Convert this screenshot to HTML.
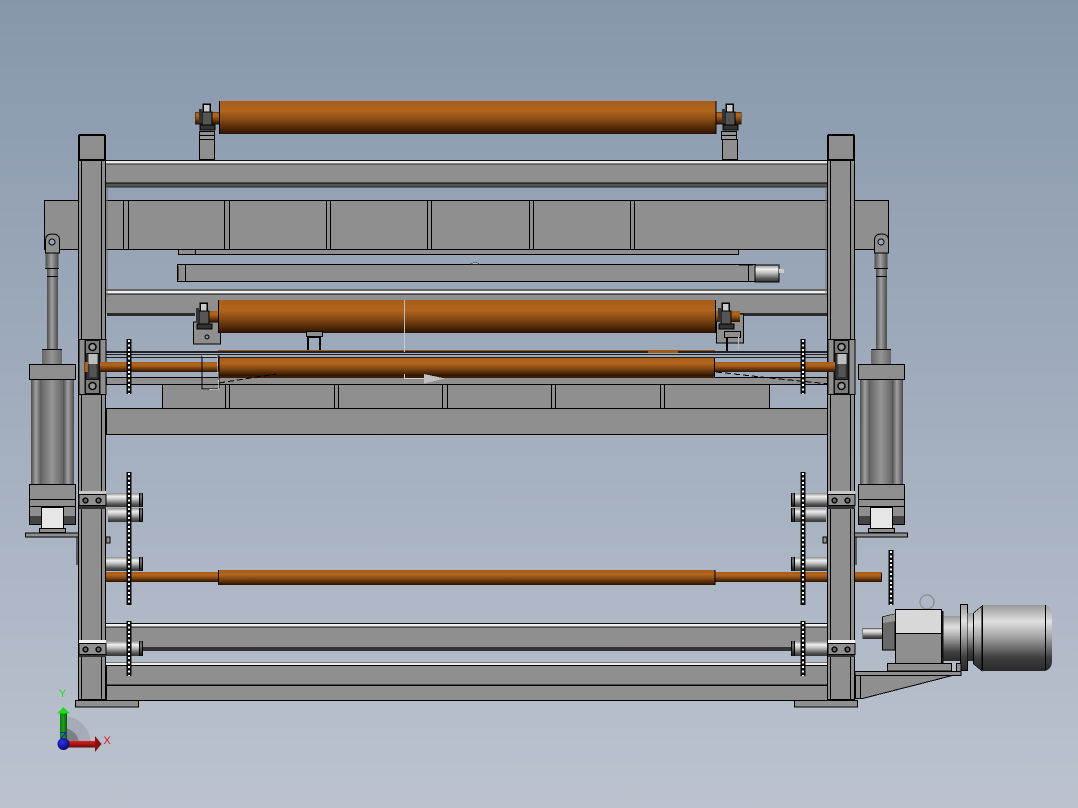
<!DOCTYPE html>
<html><head><meta charset="utf-8"><title>CAD</title>
<style>
html,body{margin:0;padding:0;width:1078px;height:808px;overflow:hidden;background:#a0abbb}
svg{display:block}
.g{fill:#8f8f8f;stroke:#000;stroke-width:1}
.n{fill:none;stroke:#000;stroke-width:1}
.b2{fill:none;stroke:#000;stroke-width:2}
.w{fill:#e8e8e8;stroke:#000;stroke-width:1}
.d{fill:#1a1a1a}
text{font-family:"Liberation Sans",sans-serif}
</style></head><body>
<svg width="1078" height="808" viewBox="0 0 1078 808" xmlns="http://www.w3.org/2000/svg" shape-rendering="crispEdges">
<defs>
<linearGradient id="bg" x1="0" y1="0" x2="0" y2="1"><stop offset="0" stop-color="#8797ab"/><stop offset=".5" stop-color="#a1adbd"/><stop offset="1" stop-color="#bcc3cf"/></linearGradient>
<linearGradient id="or" x1="0" y1="0" x2="0" y2="1"><stop offset="0" stop-color="#a55d1a"/><stop offset=".3" stop-color="#b3651c"/><stop offset=".55" stop-color="#8a4c14"/><stop offset=".8" stop-color="#552c0a"/><stop offset="1" stop-color="#2b1200"/></linearGradient>
<linearGradient id="si" x1="0" y1="0" x2="0" y2="1"><stop offset="0" stop-color="#8c8c8c"/><stop offset=".25" stop-color="#f0f0f0"/><stop offset=".5" stop-color="#b5b5b5"/><stop offset=".8" stop-color="#555"/><stop offset="1" stop-color="#333"/></linearGradient>
<linearGradient id="mo" x1="0" y1="0" x2="0" y2="1"><stop offset="0" stop-color="#9a9a9a"/><stop offset=".25" stop-color="#e0e0e0"/><stop offset=".5" stop-color="#9f9f9f"/><stop offset=".8" stop-color="#3f3f3f"/><stop offset="1" stop-color="#2a2a2a"/></linearGradient>
<linearGradient id="cy" x1="0" y1="0" x2="1" y2="0"><stop offset="0" stop-color="#4c4c4c"/><stop offset=".45" stop-color="#a0a0a0"/><stop offset="1" stop-color="#4a4a4a"/></linearGradient>
<linearGradient id="cy2" x1="0" y1="0" x2="1" y2="0"><stop offset="0" stop-color="#666"/><stop offset=".5" stop-color="#959595"/><stop offset="1" stop-color="#666"/></linearGradient>
<linearGradient id="gr" x1="0" y1="0" x2="1" y2="0"><stop offset="0" stop-color="#0b7a0b"/><stop offset=".5" stop-color="#1fa01f"/><stop offset="1" stop-color="#075507"/></linearGradient>
<linearGradient id="rd" x1="0" y1="0" x2="0" y2="1"><stop offset="0" stop-color="#e02020"/><stop offset="1" stop-color="#6a0a0a"/></linearGradient>
<radialGradient id="bl" cx=".4" cy=".35" r=".7"><stop offset="0" stop-color="#3030e8"/><stop offset="1" stop-color="#08086a"/></radialGradient>

<g id="spr"><rect x="-2.500" y="0" width="5" height="55" fill="#0a0a0a"/><line x1="0" y1="1" x2="0" y2="55" stroke="#fff" stroke-width="2" stroke-dasharray="2 2.400"/></g>
<g id="sprL"><rect x="-2.500" y="0" width="5" height="133" fill="#0a0a0a"/><line x1="0" y1="1" x2="0" y2="133" stroke="#fff" stroke-width="2" stroke-dasharray="2 2.400"/></g>

<g id="bearing">
<rect x="0.500" y="0.500" width="27" height="55" class="g"/>
<rect x="6" y="0.500" width="16" height="55" fill="#0e0e0e"/>
<rect x="7.500" y="2" width="13" height="12" fill="#7c7c7c"/>
<rect x="7.500" y="41" width="13" height="13" fill="#7c7c7c"/>
<circle cx="14" cy="8" r="3.500" fill="#999" stroke="#000" stroke-width="1.500" shape-rendering="auto"/>
<circle cx="14" cy="47" r="3.500" fill="#999" stroke="#000" stroke-width="1.500" shape-rendering="auto"/>
<rect x="8" y="15" width="12" height="25" fill="#333"/>
<rect x="10" y="15" width="9" height="10" fill="#bdbdbd"/>
<rect x="11" y="25" width="7" height="13" fill="#555"/>
</g>

<g id="clamp">
<rect x="0.500" y="0.500" width="27" height="11" class="g"/>
<circle cx="7" cy="6.500" r="2.400" fill="#666" stroke="#000" stroke-width="1.400" shape-rendering="auto"/>
<circle cx="20" cy="6.500" r="2.400" fill="#666" stroke="#000" stroke-width="1.400" shape-rendering="auto"/>
</g>

<g id="pivot">
<rect x="3" y="0" width="7" height="10" fill="#c9c9c9" stroke="#000" stroke-width="1.500"/>
<rect x="2" y="8" width="10" height="14" fill="#555" stroke="#000"/>
<rect x="-1" y="5" width="3" height="14" fill="#333"/>
<rect x="0" y="21" width="15" height="5" fill="#333" stroke="#000"/>
</g>
</defs>

<rect width="1078" height="808" fill="url(#bg)"/>

<!-- top roller -->
<rect x="195" y="112" width="546" height="12" fill="url(#or)" stroke="#222" stroke-width=".5"/>
<rect x="219" y="101" width="497" height="33" fill="url(#or)"/>
<line x1="219.500" y1="101" x2="219.500" y2="134" stroke="#000"/><line x1="716" y1="101" x2="716" y2="134" stroke="#000"/>
<use href="#pivot" x="200" y="104"/><use href="#pivot" x="723" y="104"/>
<rect x="199.500" y="131.500" width="15" height="4" class="g"/><rect x="199.500" y="135.500" width="15" height="4" fill="#999" stroke="#000"/>
<rect x="721.500" y="131.500" width="15" height="4" class="g"/><rect x="721.500" y="135.500" width="15" height="4" fill="#999" stroke="#000"/>
<rect x="199.500" y="139.500" width="15" height="20" class="g"/><rect x="722.500" y="139.500" width="15" height="20" class="g"/>

<!-- back beam -->
<rect x="44.500" y="200.500" width="844" height="49" class="g"/>
<g class="n"><path d="M123.500 200v50M128.500 200v50M224.500 200v50M229.500 200v50M326.500 200v50M330.500 200v50M427.500 200v50M431.500 200v50M529.500 200v50M533.500 200v50M630.500 200v50M634.500 200v50"/></g>
<rect x="178.500" y="249.500" width="18" height="5" class="g"/><rect x="195.500" y="249.500" width="543" height="5" class="g"/>

<!-- cylinder -->
<rect x="177.500" y="264.500" width="578" height="17" class="g"/>
<path d="M185.500 265v16M178 266v14M739 265h14M748.500 265v16" class="n"/>
<rect x="755" y="265" width="24" height="17" fill="url(#si)" stroke="#000"/>
<rect x="779" y="269" width="5" height="4" fill="#ccc"/>
<path d="M470 264l6-2 3 2z" fill="#bbb" stroke="#333" stroke-width=".5"/>

<!-- upper rail 2 -->
<rect x="106" y="289" width="721" height="2" fill="#666"/>
<rect x="106" y="291" width="721" height="3" fill="#efefef"/>
<rect x="106" y="294" width="721" height="19" fill="#8f8f8f"/>
<line x1="106" y1="294" x2="827" y2="294" stroke="#000"/>
<rect x="107" y="313" width="88" height="3" fill="#2a2a2a"/>
<rect x="735" y="313" width="92" height="3" fill="#2a2a2a"/>

<!-- lower beam + plate -->
<rect x="106.500" y="408.500" width="721" height="26" class="g"/>
<rect x="162.500" y="384.500" width="607" height="24" class="g"/>
<path d="M225.500 384v24M229.500 384v24M334.500 384v24M338.500 384v24M442.500 384v24M447.500 384v24M551.500 384v24M555.500 384v24M660.500 384v24M664.500 384v24" class="n"/>
<rect x="106.500" y="377.500" width="721" height="7" class="g"/>

<!-- middle roller 2 -->
<rect x="193.500" y="322" width="27" height="22" fill="#8f8f8f" stroke="#000"/>
<circle cx="207" cy="337" r="2" fill="none" stroke="#000" shape-rendering="auto"/>
<rect x="716.500" y="314" width="27" height="29" class="g"/>
<rect x="205" y="311" width="535" height="11" fill="url(#or)"/>
<rect x="218" y="300" width="498" height="33" fill="url(#or)"/>
<line x1="218.500" y1="300" x2="218.500" y2="333" stroke="#000"/><line x1="715.500" y1="300" x2="715.500" y2="333" stroke="#000"/>
<use href="#pivot" x="197" y="303"/><use href="#pivot" x="719" y="303"/>
<rect x="306.500" y="331.500" width="16" height="5" class="g"/>
<path d="M308 337v16M320 337v16" class="b2"/><line x1="309" y1="337.500" x2="320" y2="337.500" stroke="#000"/>
<rect x="724.500" y="331.500" width="16" height="6" class="g"/>
<path d="M727 337v16" class="b2"/><line x1="738.500" y1="337" x2="738.500" y2="353" stroke="#bbb"/>

<!-- lines and roller 3 -->
<rect x="218" y="350" width="497" height="2" fill="#9a5818"/>
<rect x="106" y="351" width="721" height="2" fill="#222"/>
<rect x="106" y="354" width="721" height="1" fill="#222"/>
<rect x="106" y="357" width="721" height="1" fill="#222"/>
<rect x="648" y="350" width="30" height="3" fill="#a05a18"/>
<rect x="218" y="376" width="497" height="2" fill="#3a1d04"/>
<rect x="100" y="362" width="735" height="10" fill="url(#or)"/>
<rect x="218" y="358" width="497" height="18" fill="url(#or)"/>
<line x1="218.500" y1="358" x2="218.500" y2="377" stroke="#000"/><line x1="714.500" y1="358" x2="714.500" y2="377" stroke="#000"/>
<path d="M202 356h17v33h-17z" fill="none" stroke="#000" stroke-width="1.200"/>
<path d="M202 356l15 0 2 33-17 1" fill="none" stroke="#ccc" stroke-width=".6"/>
<path d="M219 383l57-9M716 372l54 6 60 6" stroke="#000" stroke-dasharray="6 3" fill="none"/>
<line x1="404.500" y1="300" x2="404.500" y2="333" stroke="#bdbdbd"/><line x1="404.500" y1="333" x2="404.500" y2="352" stroke="#c8c8c8"/>
<path d="M404.500 374v4.500h20" stroke="#ccc" fill="none"/>
<path d="M424 374l21 4.500-21 5z" fill="#c0c0c0"/>

<!-- shafts lower -->
<rect x="106" y="493" width="37" height="14" fill="url(#si)"/>
<rect x="108" y="508" width="35" height="14" fill="url(#si)"/>
<rect x="106" y="557" width="37" height="14" fill="url(#si)"/>
<rect x="791" y="493" width="37" height="14" fill="url(#si)"/>
<rect x="791" y="508" width="35" height="14" fill="url(#si)"/>
<rect x="791" y="557" width="37" height="14" fill="url(#si)"/>
<path d="M139.500 493v14M142 493v14M139.500 508v14M142 508v14M139.500 557v14M142 557v14M794 493v14M791.500 493v14M794 508v14M791.500 508v14M794 557v14M791.500 557v14" stroke="#000" stroke-width="1.500"/>
<!-- orange bottom shaft -->
<rect x="106" y="572" width="776" height="10" fill="url(#or)"/>
<rect x="218" y="570" width="497" height="15" fill="url(#or)"/>
<line x1="218.500" y1="570" x2="218.500" y2="585" stroke="#000"/><line x1="715" y1="570" x2="715" y2="585" stroke="#000"/>
<rect x="881" y="573" width="1" height="8" fill="#111"/>

<!-- lower rails -->
<rect x="106" y="623" width="721" height="1" fill="#111"/><rect x="106" y="624" width="721" height="3" fill="#f0f0f0"/>
<rect x="106" y="627" width="721" height="20" fill="#8f8f8f"/>
<line x1="106" y1="627" x2="827" y2="627" stroke="#111"/>
<rect x="143" y="647" width="648" height="4" fill="#333"/>
<rect x="106" y="662" width="721" height="1" fill="#777"/><rect x="106" y="663" width="721" height="2.500" fill="#eee"/>
<rect x="106.500" y="665.500" width="721" height="19.500" class="g"/>
<rect x="106.500" y="685.500" width="721" height="15" class="g"/>
<rect x="106" y="641" width="37" height="15" fill="url(#si)"/>
<rect x="791" y="641" width="37" height="15" fill="url(#si)"/>
<path d="M139.500 641v15M142 641v15M794 641v15M791.500 641v15" stroke="#000" stroke-width="1.500"/>

<!-- top rail -->
<rect x="106" y="160" width="721" height="1" fill="#111"/><rect x="106" y="161" width="721" height="3" fill="#e8e8e8"/>
<rect x="106" y="164" width="721" height="19" fill="#8f8f8f"/><line x1="106" y1="164" x2="827" y2="164" stroke="#222"/>
<rect x="106" y="183" width="721" height="4" fill="#555"/><line x1="106" y1="183" x2="827" y2="183" stroke="#000"/><line x1="106" y1="187" x2="827" y2="187" stroke="#222"/>

<!-- columns -->
<rect x="106" y="187" width="2" height="110" fill="#6f6f6f" opacity=".5"/>
<rect x="825" y="187" width="2" height="110" fill="#6f6f6f" opacity=".5"/>
<g id="col"><rect x="78.500" y="160.500" width="27" height="539" class="g"/>
<path d="M81.500 160v540M101.500 160v540" class="n"/>
<rect x="79" y="135" width="26" height="25" rx="1" fill="#8f8f8f" stroke="#000" stroke-width="2"/></g>
<use href="#col" x="749"/>

<!-- base plates -->
<rect x="75.500" y="700.500" width="63" height="6.500" class="g"/>
<rect x="794.500" y="700.500" width="63" height="6.500" class="g"/>

<!-- bearings -->
<use href="#bearing" x="78.500" y="339"/><use href="#bearing" x="827.500" y="339"/>
<rect x="85" y="362" width="3" height="10" fill="#a86018"/>
<rect x="100" y="362" width="7" height="10" fill="url(#or)"/>
<rect x="827" y="362" width="8" height="10" fill="url(#or)"/>

<!-- clamps -->
<rect x="79" y="491" width="27" height="3" fill="#c8c8c8"/><rect x="79" y="505" width="27" height="4" fill="#333"/>
<use href="#clamp" x="78.500" y="494"/>
<rect x="828" y="491" width="27" height="3" fill="#c8c8c8"/><rect x="828" y="505" width="27" height="4" fill="#333"/>
<use href="#clamp" x="827.500" y="494"/>
<rect x="79" y="640" width="27" height="3" fill="#f0f0f0"/><rect x="79" y="654" width="27" height="3" fill="#333"/>
<use href="#clamp" x="78.500" y="643"/>
<rect x="828" y="640" width="27" height="3" fill="#f0f0f0"/><rect x="828" y="654" width="27" height="3" fill="#333"/>
<use href="#clamp" x="827.500" y="643"/>

<!-- sprockets -->
<use href="#spr" x="129" y="339"/><use href="#spr" x="803" y="339"/>
<use href="#sprL" x="129" y="472"/><use href="#sprL" x="803" y="472"/>
<use href="#spr" x="129" y="621"/><use href="#spr" x="803" y="621"/>
<use href="#spr" x="891" y="550"/>

<!-- left pneumatic cylinder -->
<g id="pn">
<rect x="47" y="268" width="11" height="83" fill="url(#cy)"/>
<line x1="47" y1="276.500" x2="58" y2="276.500" stroke="#000"/>
<rect x="45.500" y="253" width="13" height="15" fill="url(#cy)"/><line x1="45" y1="268.500" x2="59" y2="268.500" stroke="#000"/>
<path d="M45.500 253v-13q0-6 7-6t7 6v13z" class="g" shape-rendering="auto"/>
<circle cx="52" cy="242" r="3" fill="#9aa7b8" stroke="#000" shape-rendering="auto"/>
<rect x="42" y="349.500" width="20" height="15" fill="url(#cy2)"/><line x1="42" y1="349.500" x2="62" y2="349.500" stroke="#000"/>
<rect x="31" y="379" width="11" height="105" fill="url(#cy)"/>
<rect x="63" y="379" width="11" height="105" fill="url(#cy)"/>
<rect x="41" y="379" width="22" height="105" fill="url(#cy2)"/>
<rect x="29.500" y="364.500" width="46" height="15" class="g"/>
<rect x="29.500" y="484.500" width="46" height="15" class="g"/><rect x="29.500" y="499.500" width="46" height="7" class="g"/>
<rect x="29.500" y="506.500" width="12" height="18" class="g"/><rect x="63.500" y="506.500" width="12" height="18" class="g"/>
<rect x="30" y="516" width="11" height="8" fill="#444"/><rect x="64" y="516" width="11" height="8" fill="#444"/>
<rect x="41.500" y="507.500" width="22" height="21" fill="#e6e6e6" stroke="#000"/>
<rect x="39.500" y="528.500" width="26" height="4" fill="#8f8f8f" stroke="#000"/>
</g>
<use href="#pn" transform="translate(829 0)"/>
<path d="M25.500 533h53v4h-53z" class="g"/>
<path d="M72 537h5v28" class="n"/>
<path d="M854.500 533h53v4h-53z" class="g"/>
<path d="M861 537h-5v28" class="n"/>
<rect x="106" y="537" width="4" height="6" fill="#8f8f8f" stroke="#000" stroke-width=".8"/>
<rect x="823" y="537" width="4" height="6" fill="#8f8f8f" stroke="#000" stroke-width=".8"/>

<!-- motor -->
<circle cx="927" cy="602" r="7" fill="none" stroke="#8d8d8d" stroke-width="1.200" shape-rendering="auto"/>
<rect x="862.500" y="628" width="20" height="10.500" fill="url(#si)" stroke="#333" stroke-width=".5"/>
<path d="M882.500 617l12.500-3v36h-12.500z" fill="#6a6a6a" stroke="#000"/>
<path d="M883 617l12-3v7l-12 2z" fill="#999"/>
<rect x="887.500" y="663.500" width="64" height="7.500" class="g"/>
<rect x="895.500" y="633.500" width="46" height="30" class="g"/>
<rect x="895.500" y="609.500" width="46" height="24" fill="#d8d8d8" stroke="#000"/>
<rect x="942" y="616" width="18" height="45" fill="url(#mo)"/>
<rect x="942" y="611" width="1.500" height="52" fill="#111"/>
<rect x="960.500" y="604.500" width="7" height="66" fill="url(#mo)" stroke="#000"/>
<rect x="967.500" y="613" width="6" height="48" fill="url(#mo)"/>
<path d="M973.500 613l8.500-7v65l-8.500-7z" fill="url(#mo)" stroke="#000" stroke-width=".6"/>
<path d="M982 605h63q7 2 7 10v46q0 8-7 10h-63z" fill="url(#mo)" shape-rendering="auto"/>
<path d="M982.500 605v65M1045.500 605v65" stroke="#000" stroke-width="1.200"/>
<rect x="956.500" y="663.500" width="4.500" height="8" class="g"/>
<path d="M855 671.500h106v4h-106z" class="g"/>
<path d="M855.500 675.500h97l-90 23h-7z" class="g"/>
<path d="M860.500 675v23" class="n"/>

<!-- triad -->
<path d="M63 744V716A28 28 0 0 1 91 744Z" fill="#a6abb6" shape-rendering="auto"/>
<path d="M63 744V728A16 16 0 0 1 79 744Z" fill="#7c7f88" shape-rendering="auto"/>
<rect x="60" y="712" width="7" height="30" fill="url(#gr)"/>
<path d="M57 713.500L63.500 707l6.500 6.500z" fill="#1edb1e" shape-rendering="auto"/>
<rect x="66" y="741" width="29" height="6.500" fill="url(#rd)"/>
<path d="M95 736l6.500 8-6.500 8z" fill="#8a1010" shape-rendering="auto"/>
<path d="M60 732.500h6l-5 6" fill="none" stroke="#1515e0" stroke-width="1"/>
<circle cx="63.500" cy="744" r="6" fill="url(#bl)" shape-rendering="auto"/>
<text x="62.500" y="697" text-anchor="middle" font-size="11" fill="#1fe01f" shape-rendering="auto">Y</text>
<text x="107" y="744" text-anchor="middle" font-size="11" fill="#e01818" shape-rendering="auto">X</text>
</svg>
</body></html>
